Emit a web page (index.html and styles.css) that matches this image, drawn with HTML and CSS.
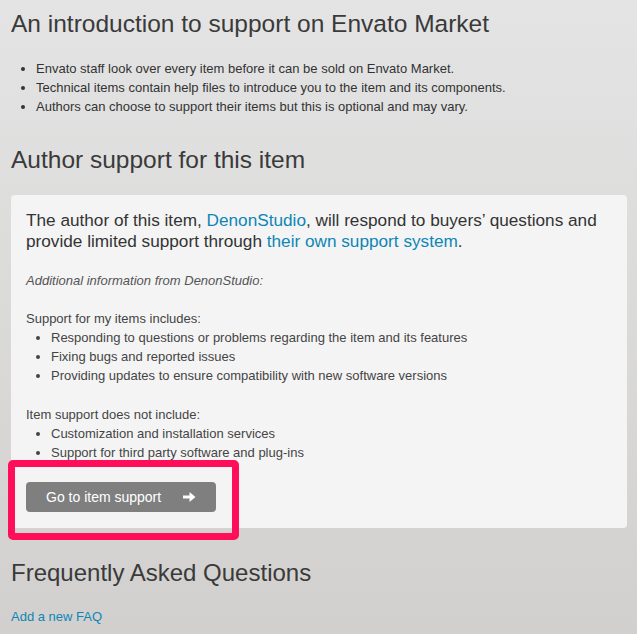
FILE: index.html
```html
<!DOCTYPE html>
<html lang="en">
<head>
  <meta charset="UTF-8" />
  <title>Item support</title>
  <link rel="stylesheet" href="styles.css">
</head>
<body>
  <div class="page">
    <h2 class="title">An introduction to support on Envato Market</h2>
    <ul class="intro-list">
      <li>Envato staff look over every item before it can be sold on Envato Market.</li>
      <li>Technical items contain help files to introduce you to the item and its components.</li>
      <li>Authors can choose to support their items but this is optional and may vary.</li>
    </ul>

    <h2 class="title">Author support for this item</h2>
    <div class="support-box">
      <p class="lead">The author of this item, <a href="#">DenonStudio</a>, will respond to buyers’ questions and provide limited support through <a href="#">their own support system</a>.</p>
      <p class="extra">Additional information from DenonStudio:</p>

      <p class="list-title">Support for my items includes:</p>
      <ul class="box-list">
        <li>Responding to questions or problems regarding the item and its features</li>
        <li>Fixing bugs and reported issues</li>
        <li>Providing updates to ensure compatibility with new software versions</li>
      </ul>

      <p class="list-title">Item support does not include:</p>
      <ul class="box-list">
        <li>Customization and installation services</li>
        <li>Support for third party software and plug-ins</li>
      </ul>

      <div class="btn-wrap">
        <a class="btn" href="#">Go to item support
          <svg class="arrow" width="13" height="12" viewBox="0 0 13 12"><path d="M0 4.5h6.5V1L12.5 6 6.5 11V7.5H0z" fill="#fff"/></svg>
        </a>
        <div class="highlight"></div>
      </div>
    </div>

    <h2 class="title faq-title">Frequently Asked Questions</h2>
    <a class="faq-link" href="#">Add a new FAQ</a>
  </div>
</body>
</html>
```

FILE: styles.css
```css
* { box-sizing: border-box; }
html, body { height: 100%; }
body {
  margin: 0;
  font-family: "Liberation Sans", Arial, sans-serif;
  color: #333;
  background: linear-gradient(#e4e4e4, #d1d0ce);
  overflow: hidden;
}
a { color: #0e86b5; text-decoration: none; }

.page {
  padding: 10px 10px 0 11px;
}
.title {
  margin: 0;
  font-size: 24.5px;
  font-weight: normal;
  line-height: 28px;
  color: #3a3a3a;
}
.intro-list {
  margin: 21px 0 30px;
  padding-left: 25px;
  font-size: 13px;
  line-height: 19px;
}

.support-box {
  margin-top: 21px;
  width: 616px;
  background: #f4f4f4;
  border-radius: 4px;
  padding: 15px 15px 16px;
}
.lead {
  margin: 0;
  font-size: 17.2px;
  line-height: 21px;
  color: #333;
}
.extra {
  margin: 19px 0 0;
  font-size: 13px;
  line-height: 19px;
  font-style: italic;
  color: #555;
}
.list-title {
  margin: 19px 0 0;
  font-size: 13px;
  line-height: 19px;
  color: #444;
}
.box-list + .list-title {
  margin-top: 20px;
}
.box-list {
  margin: 0;
  padding-left: 25px;
  font-size: 13px;
  line-height: 19px;
  color: #444;
}
.btn-wrap {
  position: relative;
  margin-top: 20px;
}
.btn {
  display: inline-flex;
  align-items: center;
  gap: 22px;
  width: 190px;
  height: 30px;
  padding-left: 20px;
  background: #7f7f7f;
  border-radius: 4px;
  color: #fff;
  font-size: 14px;
}
.highlight {
  position: absolute;
  left: -18px;
  top: -22px;
  width: 231px;
  height: 80px;
  border: 7px solid #ff0f5a;
  border-radius: 5px;
}

.faq-title {
  margin-top: 31px;
  font-size: 24px;
}
.faq-link {
  display: block;
  margin-top: 22px;
  font-size: 13px;
}
```
